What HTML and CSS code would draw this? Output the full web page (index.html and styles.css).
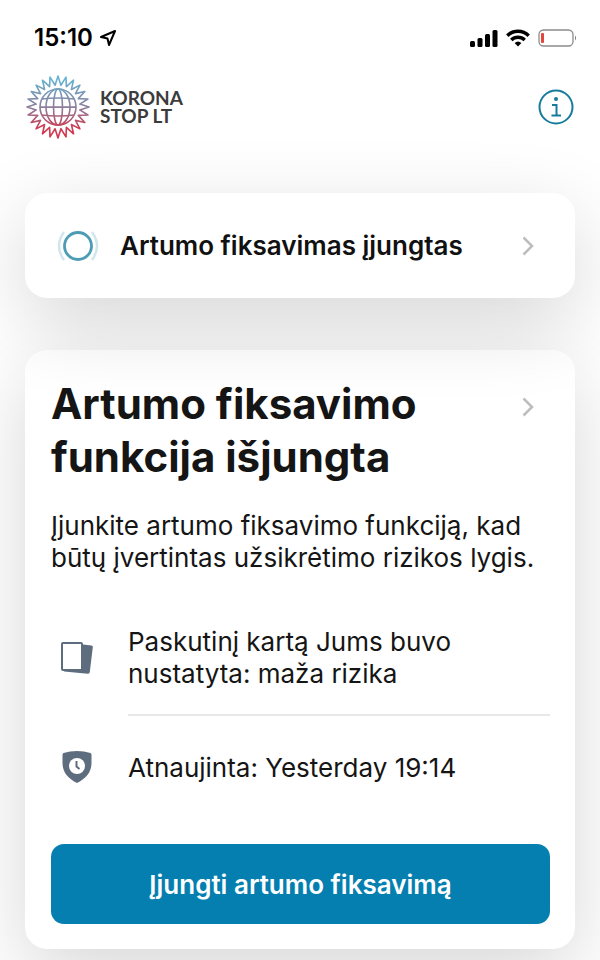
FILE: index.html
```html
<!DOCTYPE html>
<html lang="lt">
<head>
  <meta charset="UTF-8">
  <meta name="viewport" content="width=device-width, initial-scale=1">
  <title>Korona Stop LT</title>
  <link rel="stylesheet" href="styles.css">
</head>
<body>
  <div class="status-bar">
    <div class="status-time">
      <span>15:10</span>
      <svg width="18" height="18" viewBox="0 0 18 18" fill="none" stroke="#000" stroke-width="2" stroke-linejoin="round">
        <path d="M16 2 L2 8 L8.500 9.500 L10 16 Z"/>
      </svg>
    </div>
    <div class="status-icons">
      <svg width="28" height="18" viewBox="0 0 28 18">
        <rect x="0" y="12" width="5" height="6" rx="1.500"/>
        <rect x="7.500" y="9" width="5" height="9" rx="1.500"/>
        <rect x="15" y="5" width="5" height="13" rx="1.500"/>
        <rect x="22.500" y="1" width="5" height="17" rx="1.500"/>
      </svg>
      <svg width="24" height="18" viewBox="0 0 24 18" fill="none" stroke="#000" stroke-width="3.400">
        <path d="M1.300 6.700 A15.200 15.200 0 0 1 22.700 6.700"/>
        <path d="M5.300 11 A9.500 9.500 0 0 1 18.700 11"/>
        <path d="M12 17.500 L8.600 14.100 A5 5 0 0 1 15.400 14.100 Z" fill="#000" stroke="none"/>
      </svg>
      <svg width="40" height="18" viewBox="0 0 40 18">
        <rect x="1" y="1" width="34" height="16" rx="4.500" fill="none" stroke="#8c8c8c" stroke-width="1.300"/>
        <rect x="3" y="4" width="3" height="10" rx="1" fill="#e2463c"/>
        <path d="M37 6.500 Q39 9 37 11.500 Z" fill="#777"/>
      </svg>
    </div>
  </div>

  <header class="header">
    <div class="logo">
      <svg width="64" height="64" viewBox="-32 -32 64 64" fill="none" stroke="url(#logoGradient)" stroke-width="1.600">
        <defs>
          <linearGradient id="logoGradient" gradientUnits="userSpaceOnUse" x1="0" y1="-31" x2="0" y2="31">
            <stop offset="0" stop-color="#62b9d6"/>
            <stop offset="0.500" stop-color="#8c7f9d"/>
            <stop offset="0.850" stop-color="#cf3b52"/>
            <stop offset="1" stop-color="#d4344c"/>
          </linearGradient>
        </defs>
        <polygon stroke-linejoin="round" points="31,0 21.800,2.900 29.900,8 20.300,8.400 26.800,15.500 17.500,13.400 21.900,21.900 13.400,17.500 15.500,26.800 8.400,20.300 8,29.900 2.900,21.800 0,31 -2.900,21.800 -8,29.900 -8.400,20.300 -15.500,26.800 -13.400,17.500 -21.900,21.900 -17.500,13.400 -26.800,15.500 -20.300,8.400 -29.900,8 -21.800,2.900 -31,0 -21.800,-2.900 -29.900,-8 -20.300,-8.400 -26.800,-15.500 -17.500,-13.400 -21.900,-21.900 -13.400,-17.500 -15.500,-26.800 -8.400,-20.300 -8,-29.900 -2.900,-21.800 0,-31 2.900,-21.800 8,-29.900 8.400,-20.300 15.500,-26.800 13.400,-17.500 21.900,-21.900 17.500,-13.400 26.800,-15.500 20.300,-8.400 29.900,-8 21.800,-2.900"/>
        <circle cx="0" cy="0" r="18"/>
        <ellipse cx="0" cy="0" rx="12" ry="18"/>
        <ellipse cx="0" cy="0" rx="4.500" ry="18"/>
        <path d="M-18 0.100 H18 M-16 -8 Q0 -10 16 -8 M-16 8 Q0 10 16 8"/>
      </svg>
      <div class="logo-text">KORONA<br>STOP LT</div>
    </div>
    <button class="info-button" aria-label="Informacija">
      <svg width="36" height="36" viewBox="0 0 36 36" fill="none" stroke="#177c9c" stroke-width="2">
        <circle cx="18" cy="18" r="16.500"/>
        <circle cx="18" cy="10" r="2" fill="#177c9c" stroke="none"/>
        <path d="M14 16 H18.500 V26.500 M13.500 26.500 H23"/>
      </svg>
    </button>
  </header>

  <main class="content">
    <a class="card status-card" href="#">
      <svg class="status-icon" width="44" height="36" viewBox="0 0 44 36" fill="none">
        <circle cx="22" cy="18" r="13.500" stroke="#4d9cb5" stroke-width="2.800"/>
        <path d="M8 4 Q-2 18 8 32 M36 4 Q46 18 36 32" stroke="#cfe6ed" stroke-width="2.400"/>
      </svg>
      <span class="status-label">Artumo fiksavimas įjungtas</span>
      <svg class="chevron" width="12" height="20" viewBox="0 0 12 20">
        <path d="M1.500 1.500 L10 10 L1.500 18.500"/>
      </svg>
    </a>

    <section class="card risk-card">
      <div class="risk-header">
        <h1>Artumo fiksavimo funkcija išjungta</h1>
        <svg class="chevron" width="12" height="20" viewBox="0 0 12 20">
          <path d="M1.500 1.500 L10 10 L1.500 18.500"/>
        </svg>
      </div>
      <p class="risk-text">Įjunkite artumo fiksavimo funkciją, kad būtų įvertintas užsikrėtimo rizikos lygis.</p>

      <ul class="info-list">
        <li class="info-row">
          <svg width="52" height="36" viewBox="0 0 52 36">
            <path d="M28 4 L40.500 5.500 Q42 5.800 41.800 7.200 L38.800 32 Q38.500 34 36.800 33.800 L13 31.500 Z" fill="#5e6d7d"/>
            <rect x="11" y="3" width="20" height="27" rx="1" fill="#fff" stroke="#5e6d7d" stroke-width="2"/>
          </svg>
          <span class="info-label">Paskutinį kartą Jums buvo nustatyta: maža rizika</span>
        </li>
        <li class="info-row">
          <svg width="52" height="36" viewBox="0 0 52 36">
            <path d="M26 2 Q33 2 39.500 4 Q40.500 4.300 40.500 6 V14 C40.500 24 34 30 26 34 C18 30 11.500 24 11.500 14 V6 Q11.500 4.300 12.500 4 Q19 2 26 2 Z" fill="#5e6d7d"/>
            <circle cx="26" cy="17" r="8" fill="#fff"/>
            <path d="M25.500 12 V17.500 L28.500 20" fill="none" stroke="#5e6d7d" stroke-width="2"/>
          </svg>
          <span class="info-label">Atnaujinta: Yesterday 19:14</span>
        </li>
      </ul>

      <button class="enable-button">Įjungti artumo fiksavimą</button>
    </section>
  </main>
</body>
</html>
```

FILE: styles.css
```css
* {
  box-sizing: border-box;
}

body {
  font-family: Inter, "Liberation Sans", sans-serif;
  background: #fff;
  color: #151515;
  margin: 0;
  min-height: 100vh;
  overflow-x: hidden;
}

.status-bar {
  display: flex;
  justify-content: space-between;
  align-items: center;
  height: 75px;
  padding: 0 22px 0 34px;
}

.status-time {
  display: flex;
  align-items: center;
  gap: 6px;
  font-size: 24px;
  font-weight: 600;
  color: #000;
}

.status-icons {
  display: flex;
  align-items: center;
  gap: 8px;
}

.header {
  display: flex;
  justify-content: space-between;
  align-items: center;
  padding: 0 26px;
}

.logo {
  display: flex;
  align-items: center;
  gap: 10px;
}

.logo-text {
  font-family: Lato, sans-serif;
  font-size: 19px;
  font-weight: bold;
  line-height: 18px;
  color: #3c3c3c;
}

.info-button {
  display: flex;
  padding: 0;
  border: none;
  background: none;
  cursor: pointer;
}

.content {
  display: flex;
  flex-direction: column;
  gap: 52px;
  padding: 54px 25px 11px;
}

.card {
  background: #fff;
  border-radius: 22px;
  box-shadow: 0 24px 80px rgba(0, 0, 0, 0.16);
}

/* sits above the next card so its shadow falls on it */
.status-card {
  position: relative;
  z-index: 1;
  display: flex;
  align-items: center;
  gap: 20px;
  min-height: 105px;
  padding: 0 41px 0 31px;
  color: #111;
  text-decoration: none;
}

.status-label {
  flex: 1;
  font-size: 26px;
  font-weight: 600;
}

.chevron {
  flex: none;
  fill: none;
  stroke: #bdbdbd;
  stroke-width: 2.5;
}

.risk-card {
  padding: 27px 25px 25px 26px;
}

.risk-header {
  display: flex;
  justify-content: space-between;
  align-items: flex-start;
  padding-right: 16px;
}

.risk-header .chevron {
  margin-top: 20px;
}

h1 {
  margin: 0;
  max-width: 400px;
  font-size: 42px;
  font-weight: 700;
  line-height: 53px;
}

.risk-text {
  margin: 27px 0 0;
  font-size: 26px;
  line-height: 32px;
}

.info-list {
  list-style: none;
  margin: 28px 0 0;
  padding: 0;
}

.info-row {
  display: flex;
  align-items: center;
  gap: 25px;
}

.info-row svg {
  flex: none;
}

.info-label {
  flex: 1;
  padding: 24px 0;
  font-size: 26px;
  line-height: 32px;
}

.info-row + .info-row .info-label {
  padding: 36px 0;
  border-top: 2px solid #e8e8e8;
}

.enable-button {
  width: 100%;
  height: 80px;
  margin-top: 24px;
  border: none;
  border-radius: 13px;
  background: #057fb0;
  color: #fff;
  font-family: inherit;
  font-size: 26px;
  font-weight: 600;
  cursor: pointer;
}

.enable-button:hover {
  background: #046d98;
}
```
